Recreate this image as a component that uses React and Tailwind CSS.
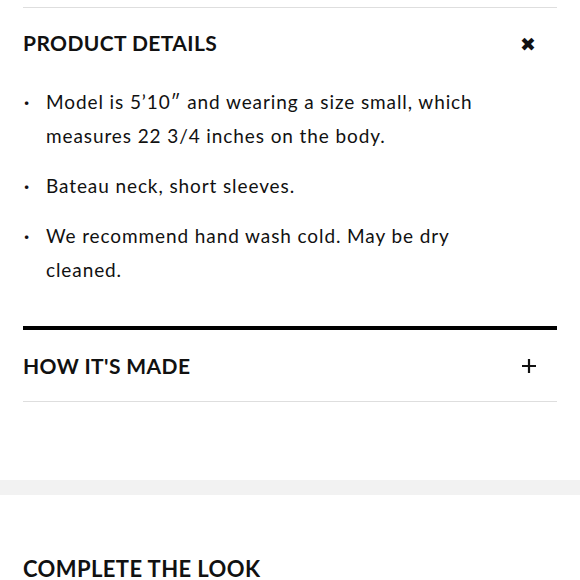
import React from 'react';

const details = [
    'Model is 5\u201910\u2033 and wearing a size small, which measures 22 3/4 inches on the body.',
    'Bateau neck, short sleeves.',
    'We recommend hand wash cold. May be dry cleaned.'
];

const App = () => {
    return (
        <div className="w-[580px] h-[580px] overflow-hidden bg-white text-[#111] font-['Lato','Liberation_Sans',sans-serif]">
            <div className="pt-[7px] px-[23px]">
                <div className="border-t border-[#dedede]"></div>

                {/* Product details */}
                <div className="flex items-center justify-between h-[70px]">
                    <h2 className="text-[21px] font-bold tracking-[0.4px]">PRODUCT DETAILS</h2>
                    <span className="mr-[21px] text-[19px] leading-none">✖</span>
                </div>

                <ul className="flex flex-col gap-[16px] pt-[7px] pb-[39px]">
                    {details.map((d) => (
                        <li key={d} className="flex text-[19px] leading-[34px] tracking-[0.9px]">
                            <span className="w-[23px] pl-[1px] shrink-0 font-bold">·</span>
                            <span className="pr-[70px]">{d}</span>
                        </li>
                    ))}
                </ul>

                <div className="border-t-4 border-black"></div>

                {/* How it's made */}
                <div className="flex items-center justify-between h-[71px]">
                    <h2 className="text-[21px] font-bold tracking-[0.4px]">HOW IT'S MADE</h2>
                    <svg className="mr-[21px]" width="14" height="14" viewBox="0 0 14 14">
                        <path d="M7 0v14M0 7h14" stroke="#111" strokeWidth="2.2" />
                    </svg>
                </div>
                <div className="border-t border-[#dedede]"></div>
            </div>

            <div className="h-[78px]"></div>
            <div className="h-[15px] bg-[#f2f2f2]"></div>

            <div className="px-[23px] pt-[57px]">
                <h2 className="text-[22px] font-bold tracking-[0.4px]">COMPLETE THE LOOK</h2>
            </div>
        </div>
    );
};

export default App;
